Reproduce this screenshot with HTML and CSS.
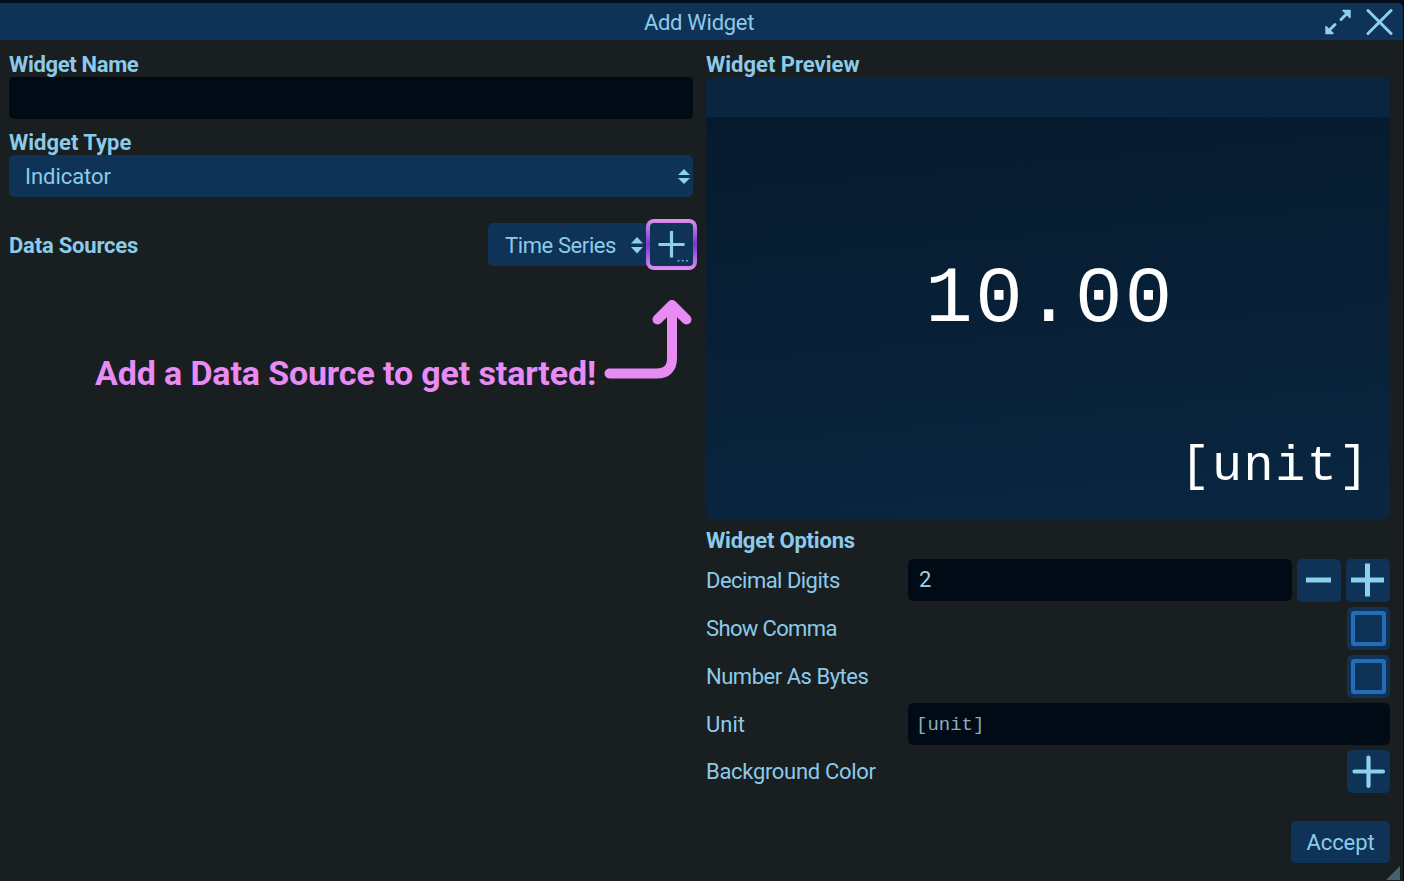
FILE: index.html
```
<!DOCTYPE html>
<html lang="en">
<head>
<meta charset="utf-8">
<title>Add Widget</title>
<link rel="stylesheet" href="styles.css">
</head>
<body>
<main class="window">
  <header class="titlebar">
    <h1 class="title">Add Widget</h1>
    <div class="window-actions">
      <svg width="28" height="28" viewBox="0 0 28 28" class="stroke-icon expand"><path d="M17 11.500 25 3.500M11 16.500 3.500 24"/><path class="head" d="M19 2.500h7v7zM2 18.500v7h7z"/></svg>
      <svg width="28" height="28" viewBox="0 0 28 28" class="stroke-icon close"><path d="M2 2.500 25 25.500M25 2.500 2 25.500"/></svg>
    </div>
  </header>
  <div class="columns">
    <section class="left">
      <h2 class="label name-label">Widget Name</h2>
      <div class="field"></div>
      <h2 class="label type-label">Widget Type</h2>
      <div class="select wide"><span class="indicator">Indicator</span><svg class="arrows" width="12" height="15" viewBox="0 0 12 15"><path d="M6 0 12 6H0zM0 9h12l-6 6z"/></svg></div>
      <div class="sources">
        <h2 class="label sources-label">Data Sources</h2>
        <div class="select compact"><span class="series">Time Series</span><svg class="arrows" width="12" height="17" viewBox="0 0 12 17"><path d="M6 0 12 6.500H0zM0 10h12l-6 6.500z"/></svg></div>
        <div class="add-source"><svg width="44" height="44" viewBox="0 0 44 44"><path d="M8.500 21.500h26M21.500 8v26.500" stroke="#8bd0ee" stroke-width="3.200"/><path d="M27.500 37.800h2m2.200 0h2m2.200 0h2" stroke="#6cacd0" stroke-width="1.600"/></svg></div>
      </div>
      <div class="hint">
        <span class="hint-text">Add a Data Source to get started!</span>
        <svg width="90" height="84" viewBox="0 0 90 84" class="hint-arrow"><path d="M12 76.500H59Q74.500 76.500 74.500 61V9M60 22.500 74.500 8 89 22.500" transform="translate(-2.500 0)"/></svg>
      </div>
    </section>
    <section class="right">
      <h2 class="label preview-label">Widget Preview</h2>
      <div class="preview">
        <div class="preview-head"></div>
        <div class="preview-body"><div class="value">10.00</div><div class="value-unit">[unit]</div></div>
      </div>
      <h2 class="label options-label">Widget Options</h2>
      <div class="option"><span class="name digits">Decimal Digits</span>
        <div class="field number">2</div>
        <div class="button minus"><svg width="44" height="43" viewBox="0 0 44 43"><path d="M9 21H34" stroke-width="5"/></svg></div>
        <div class="button plus"><svg width="44" height="43" viewBox="0 0 44 43"><path d="M5 21H38M21.500 4.500V37.500" stroke-width="5"/></svg></div>
      </div>
      <div class="option"><span class="name comma">Show Comma</span><div class="button check"><i class="box"></i></div></div>
      <div class="option"><span class="name bytes">Number As Bytes</span><div class="button check"><i class="box"></i></div></div>
      <div class="option"><span class="name unit">Unit</span><div class="field mono">[unit]</div></div>
      <div class="option color-row"><span class="name bg">Background Color</span><div class="button check"><svg width="43" height="43" viewBox="0 0 43 43"><path d="M7.500 21.500H36M21.500 7.500V36" stroke-width="4.200" stroke-linecap="round"/></svg></div></div>
      <div class="footer"><div class="accept">Accept</div></div>
    </section>
  </div>
  <i class="grip"></i>
</main>
</body>
</html>
```
FILE: styles.css
```
* { box-sizing: border-box; }
body {
  margin: 0;
  height: 881px;
  padding: 3px 1px 0 0;
  overflow: hidden;
  background: #020d1b;
  color: #8bcbe9;
  font: 22px/26px Roboto, sans-serif;
}
.window {
  position: relative;
  height: 878px;
  background: #191e21;
  border-radius: 0 5px 0 0;
  overflow: hidden;
}
.titlebar {
  position: relative;
  height: 37px;
  background: #0f3357;
  display: flex;
  justify-content: center;
  align-items: center;
}
.title { margin: 0; padding: 2px 5px 0 0; font-size: 22px; font-weight: 400; letter-spacing: -.3px; line-height: 26px; }
.window-actions { position: absolute; right: 9px; top: 5px; display: flex; gap: 14px; }
.stroke-icon { fill: none; stroke: #8bd0ee; stroke-linecap: round; stroke-linejoin: round; }
.expand { stroke-width: 3; }
.head { fill: #8bd0ee; stroke-width: 1.5; }
.close { stroke-width: 3; }
.columns {
  display: grid;
  grid-template-columns: 684px 684px;
  column-gap: 13px;
  padding: 11px 0 0 9px;
}
.label { margin: 0; height: 26px; font-size: 22px; line-height: 27px; font-weight: 700; white-space: nowrap; }
.name-label { letter-spacing: -.33px; }
.type-label { margin-top: 10px; letter-spacing: 0; }
.field { height: 42px; border-radius: 5px; background: #000b15; }
.select {
  height: 42px;
  border-radius: 5px;
  background: #0f3357;
  display: flex;
  align-items: center;
  justify-content: space-between;
  padding: 1px 3px 0 16px;
}
.arrows { fill: #8bd0ee; flex: none; }
.indicator { letter-spacing: -.05px; }
.sources { display: flex; align-items: center; height: 51px; margin-top: 22px; width: 688px; }
.sources-label { flex: 1; letter-spacing: -.2px; }
.compact { width: 161px; height: 43px; padding-right: 6px; padding-left: 17px; margin-right: -3px; }
.series { letter-spacing: -.4px; padding-top: 1px; }
.add-source {
  width: 51px; height: 51px;
  border: 4px solid transparent;
  border-radius: 8px;
  background: linear-gradient(#0f3357, #0f3357) padding-box, linear-gradient(#df92f1, #7936d2 50%, #df92f1) border-box;
}
.add-source svg { display: block; }
.add-source path { fill: none; }
.hint { display: flex; margin: 27px 0 0 86px; align-items: flex-end; }
.hint-text { width: 505px; font-size: 34px; line-height: 40px; font-weight: 700; letter-spacing: -.14px; color: #e88bf5; white-space: nowrap; margin-bottom: -12px; }
.hint-arrow { fill: none; stroke: #e88bf5; stroke-width: 10; stroke-linecap: round; stroke-linejoin: round; overflow: visible; }
.preview { height: 442px; border-radius: 5px; overflow: hidden; }
.preview-head { height: 40px; background: #0a2540; }
.preview-body {
  height: 402px;
  background: linear-gradient(175deg, #061a2d, #0a2641);
  color: #fff;
  font-family: "Liberation Mono", monospace;
  display: flex;
  flex-direction: column;
}
.value { margin-top: 136px; text-align: center; font-size: 79px; line-height: 94px; padding-left: 4px; letter-spacing: 2.5px; }
.value-unit { margin-top: 90px; text-align: right; font-size: 50px; line-height: 60px; padding-right: 20px; letter-spacing: 1.6px; }
.options-label { margin: 8px 0 6px; letter-spacing: -.2px; }
.option { height: 43px; margin-bottom: 5px; display: flex; align-items: flex-start; }
.name { width: 202px; padding-top: 9px; white-space: nowrap; }
.digits { letter-spacing: -.52px; }
.comma { letter-spacing: -.64px; }
.bytes { letter-spacing: -.48px; }
.bg { letter-spacing: -.31px; }
.number { width: 384px; margin-right: 5px; padding: 8px 11px; color: #a3cee0; }
.button { background: #0f3357; border-radius: 5px; height: 43px; width: 44px; }
.button svg { display: block; stroke: #8bd0ee; fill: none; }
.plus { margin-left: 5px; }
.check { width: 43px; margin-left: auto; display: grid; place-items: center; }
.box { width: 35px; height: 35px; border: 4px solid #246bb8; border-radius: 3px; }
.mono { width: 482px; padding: 9px 8px; font: 19px/26px "Liberation Mono", monospace; color: #8baebd; }
.color-row { margin-top: -1px; }
.footer { margin-top: 28px; display: flex; justify-content: flex-end; }
.accept { width: 99px; height: 42px; padding-top: 9px; border-radius: 5px; background: #0f3357; text-align: center; letter-spacing: -.1px; }
.grip { position: absolute; right: 3px; bottom: 1px; width: 14px; height: 14px; background: #466170; clip-path: polygon(100% 0, 100% 100%, 0 100%); }
```
